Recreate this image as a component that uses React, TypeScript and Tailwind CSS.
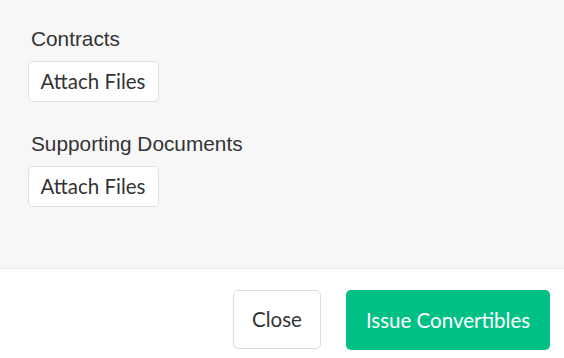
import React from "react";

function AttachButton() {
  return (
    <button
      type="button"
      className="flex h-[41px] w-[131px] items-center justify-center rounded-[5px] border border-[#e0e0e0] bg-white pr-[1px] font-['Lato',sans-serif] text-[20.5px] text-[#333333]"
    >
      Attach Files
    </button>
  );
}

function Field({ label }: { label: string }) {
  return (
    <div className="flex flex-col items-start">
      <div className="pl-[3px] font-['Liberation_Sans',Arial,sans-serif] text-[20.8px] leading-[24px] text-[#333333]">
        {label}
      </div>
      <div className="mt-[10px]">
        <AttachButton />
      </div>
    </div>
  );
}

export default function App() {
  return (
    <div className="flex h-[358px] w-[564px] flex-col bg-white">
      <div className="flex h-[268px] flex-col gap-[30px] bg-[#f7f7f7] pl-[28px] pt-[27px]">
        <Field label="Contracts" />
        <Field label="Supporting Documents" />
      </div>
      <div className="flex flex-1 items-start justify-end gap-[25px] border-t border-[#ececec] pr-[14px] pt-[21px]">
        <button
          type="button"
          className="flex h-[59px] w-[88px] items-center justify-center rounded-[5px] border border-[#dddddd] bg-white font-['Lato',sans-serif] text-[20.5px] text-[#333333]"
        >
          Close
        </button>
        <button
          type="button"
          className="flex h-[60px] w-[204px] items-center justify-center rounded-[5px] bg-[#00c185] font-['Lato',sans-serif] text-[20.5px] text-white"
        >
          Issue Convertibles
        </button>
      </div>
    </div>
  );
}
